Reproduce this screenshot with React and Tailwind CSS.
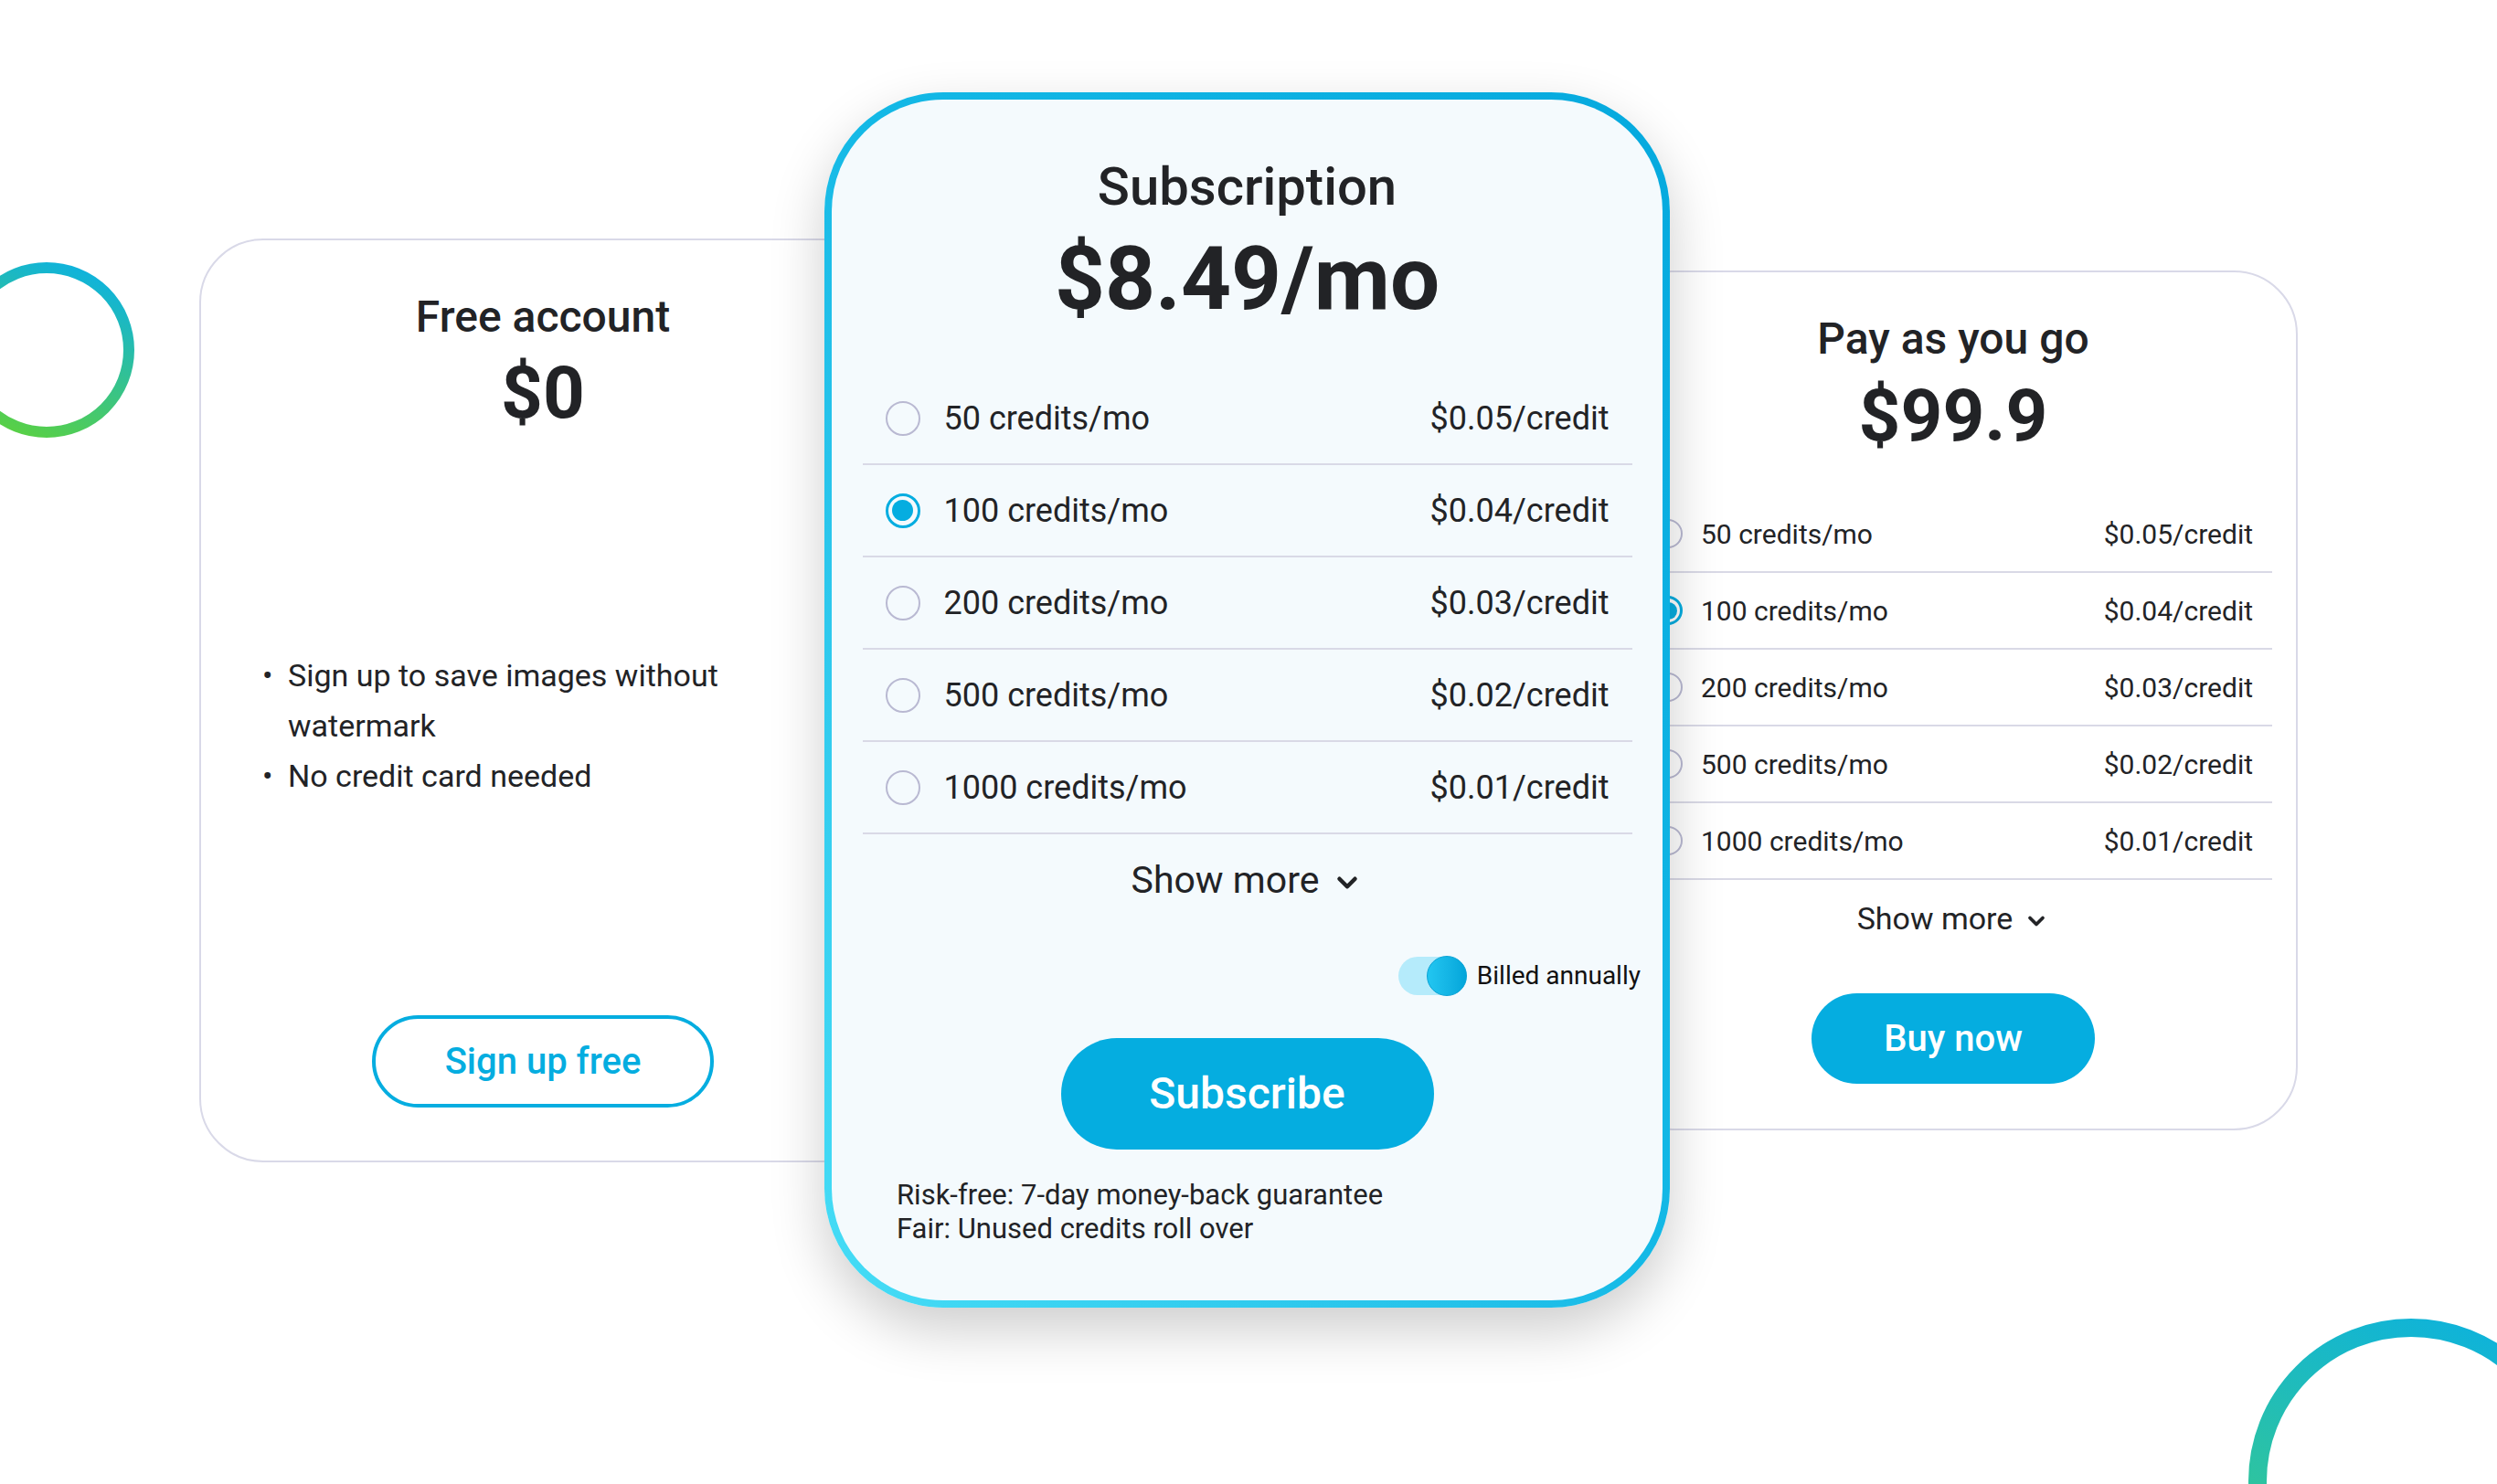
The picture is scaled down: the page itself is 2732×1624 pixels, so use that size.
import { ChevronDown } from 'lucide-react';

const planos = [
  ['50 credits/mo', '$0.05/credit'],
  ['100 credits/mo', '$0.04/credit'],
  ['200 credits/mo', '$0.03/credit'],
  ['500 credits/mo', '$0.02/credit'],
  ['1000 credits/mo', '$0.01/credit'],
];

function Radio({ checked, big }) {
  if (big) {
    return checked ? (
      <span className="flex h-[38px] w-[38px] shrink-0 items-center justify-center rounded-full border-[3px] border-[#05ade0]">
        <span className="h-[23px] w-[23px] rounded-full bg-[#05ade0]" />
      </span>
    ) : (
      <span className="h-[38px] w-[38px] shrink-0 rounded-full border-2 border-[#b9b9d2]" />
    );
  }
  return checked ? (
    <span className="flex h-[32px] w-[32px] shrink-0 items-center justify-center rounded-full border-[3px] border-[#05ade0]">
      <span className="h-[19px] w-[19px] rounded-full bg-[#05ade0]" />
    </span>
  ) : (
    <span className="h-[32px] w-[32px] shrink-0 rounded-full border-2 border-[#b9b9d2]" />
  );
}

function Ring({ id, size, stroke, from, to, className }) {
  const r = size / 2 - stroke / 2;
  return (
    <svg width={size} height={size} viewBox={`0 0 ${size} ${size}`} className={className}>
      <defs>
        <linearGradient id={id} x1="0.7" y1="0" x2="0.3" y2="1">
          <stop offset="0" stopColor={from} />
          <stop offset="1" stopColor={to} />
        </linearGradient>
      </defs>
      <circle cx={size / 2} cy={size / 2} r={r} fill="none" stroke={`url(#${id})`} strokeWidth={stroke} />
    </svg>
  );
}

export default function App() {
  return (
    <div className="relative h-[1624px] w-[2732px] overflow-hidden bg-white font-['Roboto','Liberation_Sans',sans-serif] text-[#222326]">
      {/* aros decorativos */}
      <Ring id="ringA" size={192} stroke={12} from="#0fb3dc" to="#58d046" className="absolute left-[-45px] top-[287px]" />
      <Ring id="ringB" size={356} stroke={20} from="#0fb3d9" to="#3ccb86" className="absolute left-[2460px] top-[1443px]" />

      <div className="relative flex items-start pl-[218px]">
        {/* Free account */}
        <div className="mt-[261px] flex h-[1011px] w-[752px] shrink-0 flex-col items-center rounded-[70px] border-2 border-[#d9d9e8] bg-white pt-[56px]">
          <h3 className="text-[48px] font-medium leading-[56px]">Free account</h3>
          <div className="mt-[10px] text-[80px] font-bold leading-[90px]">$0</div>
          <ul className="mt-[237px] w-[620px] self-start pl-[67px] text-[34px] leading-[55px]">
            <li className="flex">
              <span className="w-[28px] shrink-0">•</span>
              <span className="w-[500px]">Sign up to save images without watermark</span>
            </li>
            <li className="flex">
              <span className="w-[28px] shrink-0">•</span>
              <span>No credit card needed</span>
            </li>
          </ul>
          <button className="mt-[234px] h-[101px] w-[374px] rounded-full border-4 border-[#05ade0] text-[40px] font-medium text-[#05ade0]">
            Sign up free
          </button>
        </div>

        {/* Subscription */}
        <div className="relative z-10 -ml-[68px] mt-[101px] w-[925px] shrink-0 rounded-[130px] bg-gradient-to-tr from-[#46ddf6] via-[#14b9e6] to-[#05a9de] p-[8px] shadow-[0_24px_60px_rgba(0,0,0,0.2)]">
          <div className="flex flex-col items-center rounded-[122px] bg-[#f4fafd] pb-[60px] pt-[61px]">
            <h2 className="text-[58px] font-medium leading-[68px]">Subscription</h2>
            <div className="mt-[12px] text-[96px] font-bold leading-[110px]">$8.49/mo</div>
            <div className="mt-[48px] w-[842px]">
              {planos.map(([creditos, precio], i) => (
                <div key={creditos} className="flex h-[101px] items-center border-b-2 border-[#d9d9e6] px-[25px] text-[36px]">
                  <Radio checked={i === 1} big />
                  <span className="ml-[26px] flex-1">{creditos}</span>
                  <span>{precio}</span>
                </div>
              ))}
            </div>
            <button className="mt-[26px] flex items-center gap-[14px] text-[41px] leading-[48px]">
              Show more
              <ChevronDown size={34} strokeWidth={3.2} className="mt-[6px]" />
            </button>
            <div className="mt-[59px] flex w-full items-center justify-end pr-[24px]">
              <span className="relative h-[42px] w-[75px] rounded-full bg-[#b5ebfb]">
                <span className="absolute right-0 top-[-1px] h-[44px] w-[44px] rounded-full border border-[#0aa3d6] bg-gradient-to-r from-[#22c6f1] to-[#03a6da]" />
              </span>
              <span className="ml-[11px] text-[28px] leading-[44px] text-[#111]">Billed annually</span>
            </div>
            <button className="mt-[46px] h-[122px] w-[408px] rounded-full bg-[#05ade0] text-[48px] font-medium text-white">
              Subscribe
            </button>
            <div className="mt-[31px] w-full pl-[71px] text-[31px] leading-[37px]">
              <p>Risk-free: 7-day money-back guarantee</p>
              <p>Fair: Unused credits roll over</p>
            </div>
          </div>
        </div>

        {/* Pay as you go */}
        <div className="-ml-[67px] mt-[296px] flex w-[754px] shrink-0 flex-col items-center rounded-[70px] border-2 border-[#d9d9e8] bg-white pb-[49px] pt-[45px]">
          <h3 className="text-[48px] font-medium leading-[56px]">Pay as you go</h3>
          <div className="mt-[11px] text-[80px] font-bold leading-[90px]">$99.9</div>
          <div className="mt-[43px] w-[698px]">
            {planos.map(([creditos, precio], i) => (
              <div key={creditos} className="flex h-[84px] items-center border-b-2 border-[#d9d9e6] px-[21px] text-[30px]">
                <Radio checked={i === 1} />
                <span className="ml-[20px] flex-1">{creditos}</span>
                <span>{precio}</span>
              </div>
            ))}
          </div>
          <button className="mt-[22px] flex items-center gap-[12px] text-[34px] leading-[40px]">
            Show more
            <ChevronDown size={28} strokeWidth={3.2} className="mt-[5px]" />
          </button>
          <button className="mt-[62px] h-[99px] w-[310px] rounded-full bg-[#05ade0] text-[40px] font-medium text-white">
            Buy now
          </button>
        </div>
      </div>
    </div>
  );
}
